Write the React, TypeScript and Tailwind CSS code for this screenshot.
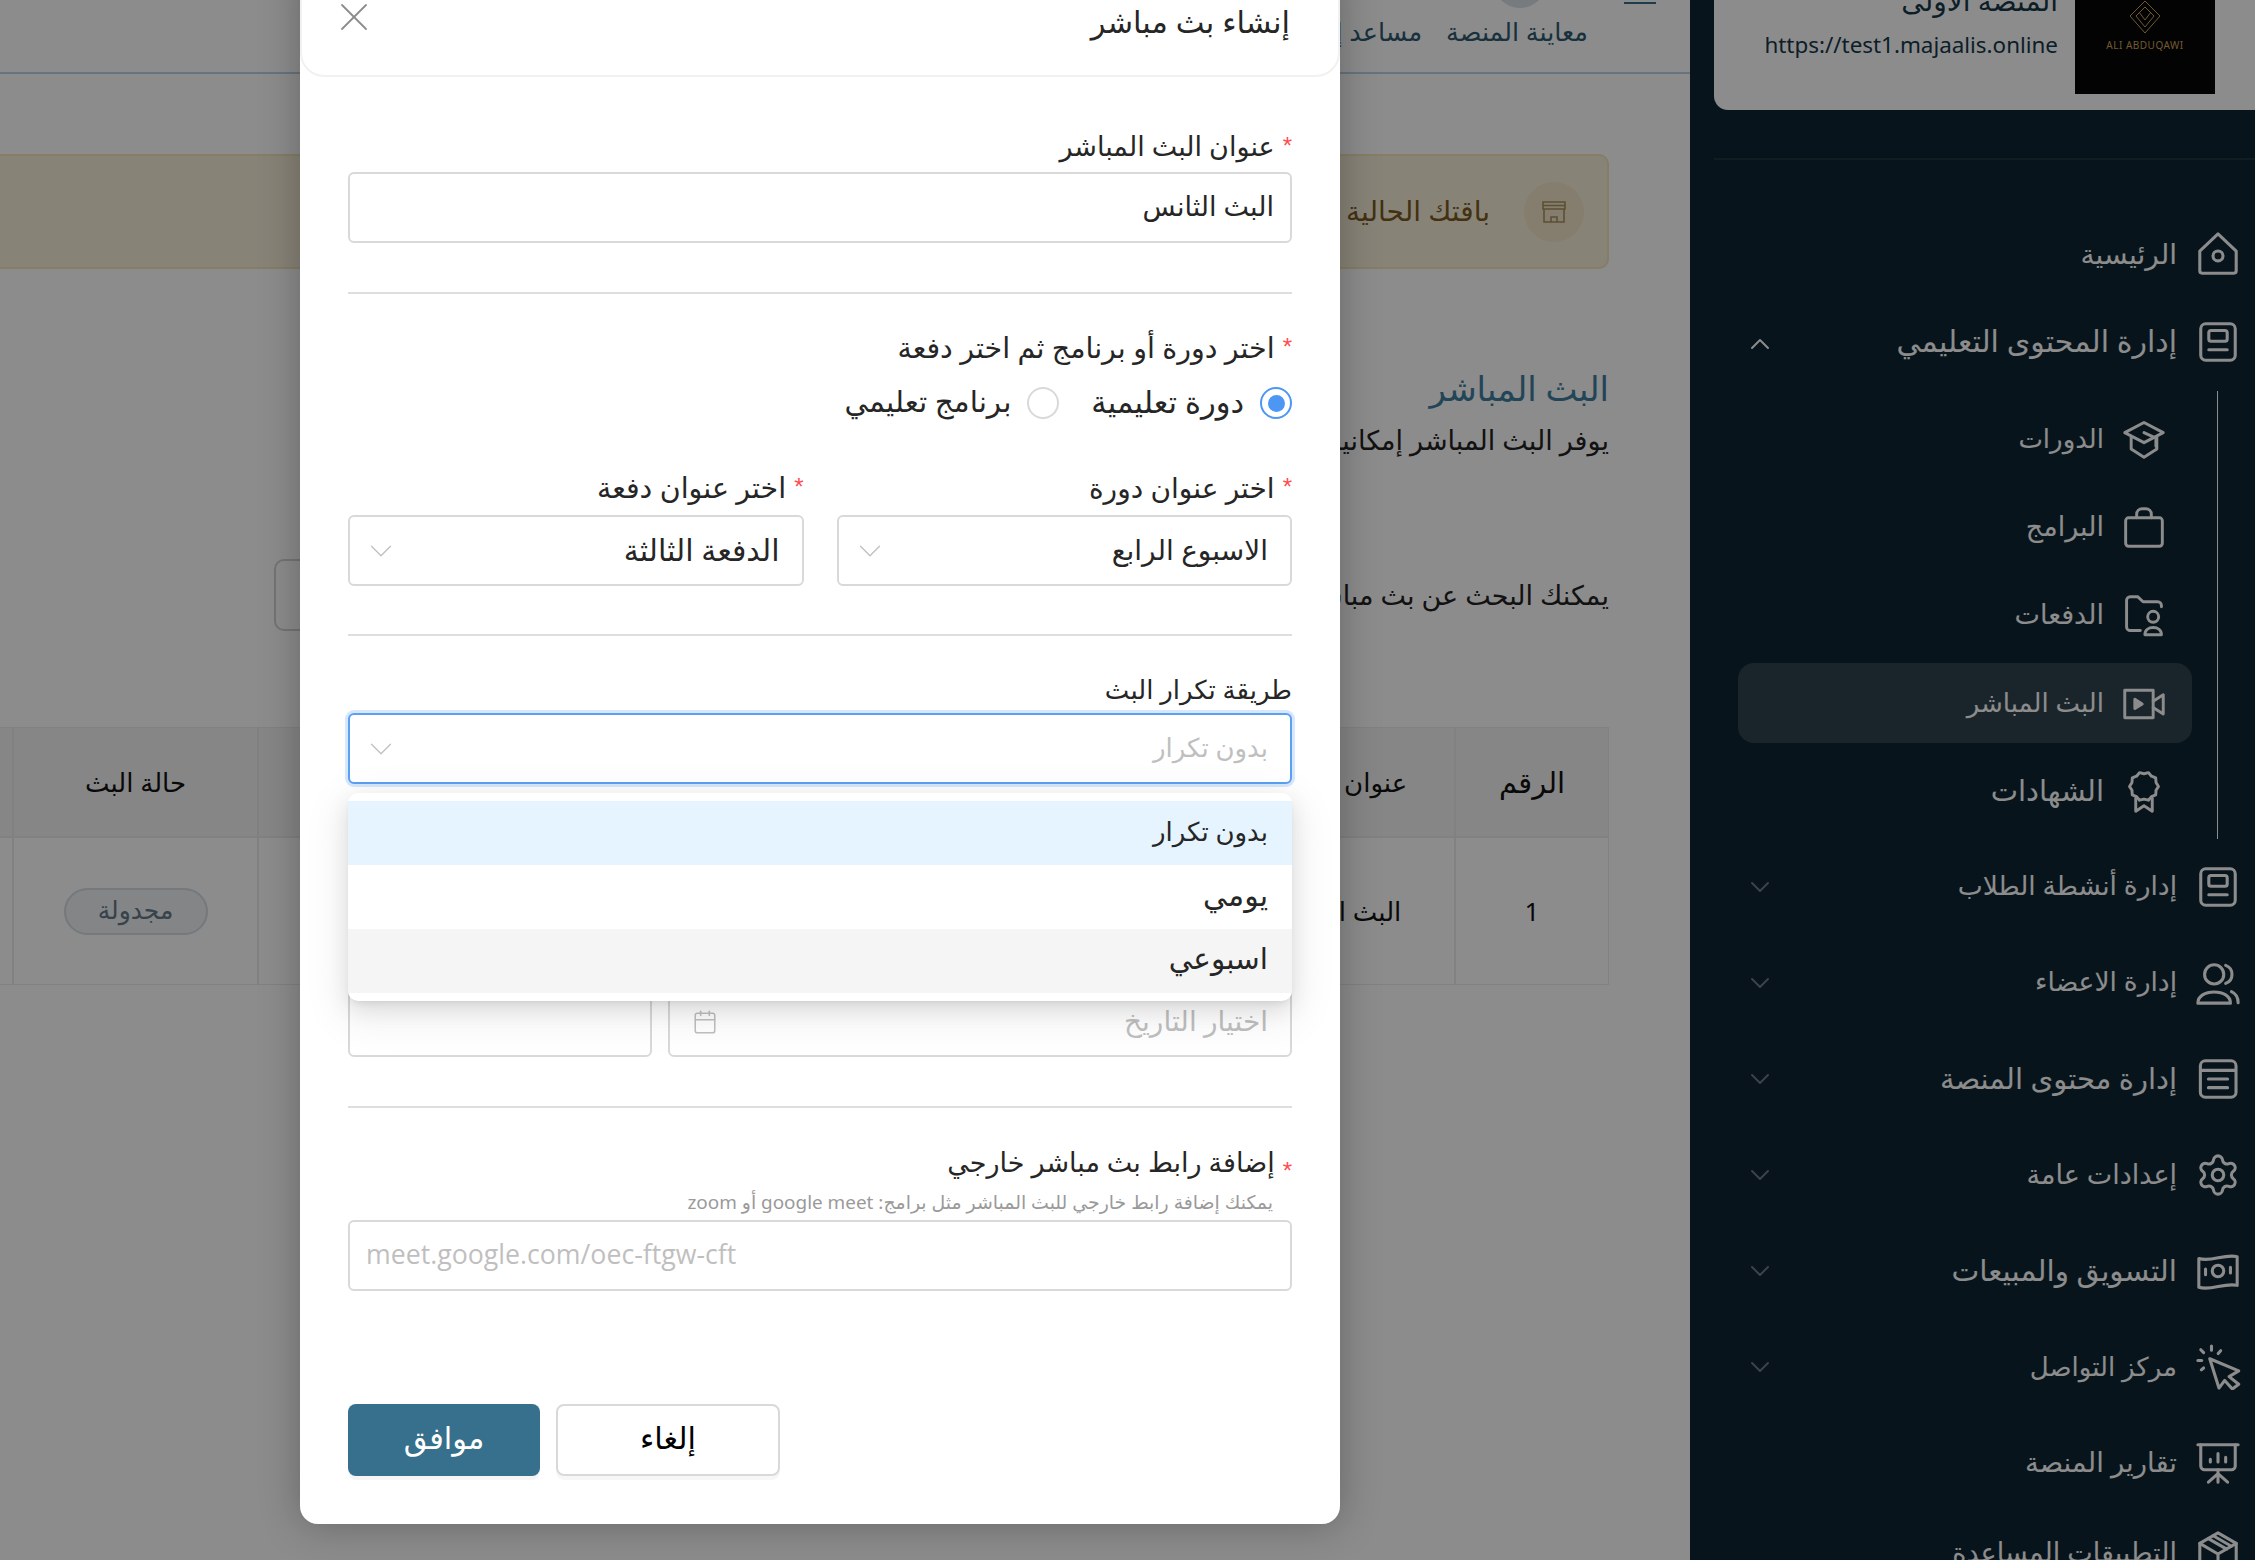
import React from "react";
import { ChevronDown, ChevronUp, X, Calendar, Settings } from "lucide-react";

const I = ({ children, s = "w-[46px] h-[46px]" }: { children: React.ReactNode; s?: string }) => (
  <svg viewBox="0 0 24 24" fill="none" stroke="currentColor" strokeWidth="1.6" strokeLinecap="round" strokeLinejoin="round" className={`${s} shrink-0`}>
    {children}
  </svg>
);

const scallop = Array.from({ length: 20 }, (_, i) => {
  const r = i % 2 ? 7.9 : 6.9;
  const a = (i / 20) * Math.PI * 2;
  return `${(12 + r * Math.sin(a)).toFixed(2)},${(9.5 - r * Math.cos(a)).toFixed(2)}`;
}).join(" ");

const icons = {
  home: <><path d="M2.5 10.5 12 1.5l9.5 9v10.3a1.2 1.2 0 0 1-1.2 1.2H3.7a1.2 1.2 0 0 1-1.2-1.2Z" /><circle cx="12" cy="13" r="2.6" /></>,
  content: <><rect x="3" y="2.5" width="18" height="19" rx="2.6" /><rect x="7.2" y="6" width="9.6" height="5.6" rx="1.2" /><path d="M7.2 16h9.6" /></>,
  list: <><rect x="2.8" y="2.5" width="18.6" height="19" rx="2.6" /><path d="M3 7.5h18M7 12h10M7 16.5h10" /></>,
  cap: <><path d="M12 3 22.5 8.5 12 14 1.5 8.5Z" /><path d="M5 11v6.5l7 4.5 7-4.5V11" /><path d="M12 8.5l6.5 3V16" /></>,
  case: <><rect x="2" y="7" width="20" height="15.5" rx="1.6" /><path d="M8 7V5a3 3 0 0 1 3-3h2a3 3 0 0 1 3 3v2" /></>,
  folder: <><path d="M10 20.5H4.5a2 2 0 0 1-2-2V4a2 2 0 0 1 2-2h4l3 2.8h8a2 2 0 0 1 2 2v.7" /><circle cx="17" cy="13" r="3" /><path d="M12.5 22.8c0-2.6 2-4 4.5-4s4.5 1.4 4.5 4Z" /></>,
  video: <><rect x="1.5" y="5" width="15.5" height="15" /><path d="M17 11l5.5-3.5v10.5L17 14.5" /><path d="M7 10v5l4-2.5Z" fill="currentColor" /></>,
  award: <><polygon points={scallop} /><path d="M7.5 16v7l4.5-3 4.5 3v-7" /></>,
  users: <><circle cx="10" cy="7.5" r="5" /><path d="M1.5 22.5c0-3.8 3.8-5.8 8.5-5.8s8.5 2 8.5 5.8Z" /><path d="M16 2.8a5 5 0 0 1 0 9.4M19 16.5c2 .9 3.5 2.6 3.5 5.8" /></>,
  money: <><path d="M2 5.5c6.5 2 13-2.5 20-1v15c-7-1.5-13.5 3-20 1Z" /><circle cx="12" cy="12" r="3" /><path d="M5.5 11v3M18.5 10v3" /></>,
  board: <><path d="M1.5 2.5h21" /><path d="M3 2.5v11a2 2 0 0 0 2 2h14a2 2 0 0 0 2-2v-11" /><path d="M12 7v4.5M8 10v1.5M16 9v2.5M12 15.5V22M12 17.5 7 22M12 17.5l5 4.5" /></>,
  box: <><path d="M12 1.5 21.5 7v10L12 22.5 2.5 17V7Z" /><path d="M2.5 7 12 12.5 21.5 7M12 12.5v10M7 4.5l9.5 5.5M9.5 3l9.5 5.5" /></>,
  click: <><path d="M7.7 7.7 22.8 14l-5 3 5 4-3.3 2.5-4-4.5-3 4Z" /><path d="M3 3l1.5 1.5M8.6 1v2.2M13.4 3.5l-1.3 1.5M1.5 8.6h2M3.3 13.5l1.2-1" /></>,
};

const Top = ({ icon, label, chev, up, h = "h-[96px]", t = "text-[27px]" }: { icon: React.ReactNode; label: string; chev?: boolean; up?: boolean; h?: string; t?: string }) => (
  <div className={`${h} shrink-0 flex items-center pr-[14px] pl-[54px] text-white`}>
    <I>{icon}</I>
    <span className={`mr-[18px] pb-[3px] ${t} leading-none flex-1 whitespace-nowrap`}>{label}</span>
    {chev && (up ? <ChevronUp className="w-[32px] h-[32px] mt-[3px] text-white" strokeWidth={1.5} /> : <ChevronDown className="w-[32px] h-[32px] text-[#6d7a80]" strokeWidth={1.5} />)}
  </div>
);

const Sub = ({ icon, label, active, t = "text-[27px]" }: { icon: React.ReactNode; label: string; active?: boolean; t?: string }) => (
  <div className={`h-[80px] shrink-0 flex items-center pr-[26px] rounded-[16px] text-white ${active ? "bg-[#2f444f]" : ""}`}>
    <I s="w-[44px] h-[44px]">{icon}</I>
    <span className={`mr-[18px] pb-[3px] ${t} leading-none whitespace-nowrap`}>{label}</span>
  </div>
);

const Sidebar = () => (
  <aside className="w-[565px] shrink-0 h-[1560px] overflow-hidden bg-[#0e2633] flex flex-col">
    <div className="ml-[24px] h-[110px] shrink-0 bg-white rounded-bl-[14px] flex items-start pr-[40px]">
      <div className="w-[140px] h-[94px] bg-[#060606] flex flex-col items-center shrink-0">
        <svg viewBox="0 0 32 34" className="w-[32px] h-[34px] text-[#c9a35d]" fill="none" stroke="currentColor" strokeWidth="1">
          <path d="M16 1 31 16 16 33 1 16Z" />
          <path d="M16 7 25 16 16 27 7 16Z" />
          <path d="M10 12l6 8 6-8" />
        </svg>
        <span className="text-[#c9a35d] text-[10px] mt-[4px] tracking-[0.5px] font-['Noto_Sans',sans-serif]" dir="ltr">ALI ABDUQAWI</span>
      </div>
      <div className="mr-[17px] -mt-[20px] flex flex-col items-start">
        <span className="text-[28px] leading-[40px] text-[#16384a]">المنصة الأولى</span>
        <span className="mt-[5px] text-[22.4px] leading-[40px] text-[#16384a]" dir="ltr">https://test1.majaalis.online</span>
      </div>
    </div>
    <div className="ml-[24px] mt-[48px] h-[2px] shrink-0 bg-[#22363f]" />
    <div className="h-[50px] shrink-0" />
    <Top h="h-[88px]" icon={icons.home} label="الرئيسية" t="text-[28px]" />
    <Top h="h-[88px]" icon={icons.content} label="إدارة المحتوى التعليمي" chev up t="text-[30px]" />
    <div className="mt-[5px] mr-[37px] h-[448px] shrink-0 border-r border-white pr-[25px] pl-[48px] pt-[8px] flex flex-col gap-[8px]">
      <Sub icon={icons.cap} label="الدورات" t="text-[26px]" />
      <Sub icon={icons.case} label="البرامج" />
      <Sub icon={icons.folder} label="الدفعات" />
      <Sub icon={icons.video} label="البث المباشر" active t="text-[26px]" />
      <Sub icon={icons.award} label="الشهادات" t="text-[29px]" />
    </div>
    <Top icon={icons.content} label="إدارة أنشطة الطلاب" chev t="text-[26.5px]" />
    <Top icon={icons.users} label="إدارة الاعضاء" chev t="text-[26.5px]" />
    <Top icon={icons.list} label="إدارة محتوى المنصة" chev t="text-[29px]" />
    <Top icon={<Settings x={0} y={0} width={24} height={24} strokeWidth={1.6} />} label="إعدادات عامة" chev />
    <Top icon={icons.money} label="التسويق والمبيعات" chev t="text-[29.5px]" />
    <Top icon={icons.click} label="مركز التواصل" chev t="text-[26px]" />
    <Top icon={icons.board} label="تقارير المنصة" t="text-[27.5px]" />
    <Top h="h-[84px]" icon={icons.box} label="التطبيقات المساعدة" />
  </aside>
);

const Main = () => (
  <main className="w-[1690px] shrink-0 h-[1560px] overflow-hidden bg-white flex flex-col text-[#111]">
    <header className="h-[74px] shrink-0 border-b-2 border-[#bcd4e6] flex items-start pr-[34px]">
      <div className="w-[32px] h-[2px] mt-[2px] bg-[#36708c] shrink-0" />
      <div className="relative mr-[36px] mt-[14px] text-[25.5px] leading-[34px] text-[#2f5a70] whitespace-nowrap">
        <div className="absolute top-[-60px] right-[41px] w-[54px] h-[54px] rounded-full bg-[#d5e0e8]" />
        معاينة المنصة
      </div>
      <div className="mr-[24px] mt-[14px] text-[25.5px] leading-[34px] text-[#2f5a70] whitespace-nowrap">مساعد إنشاء الدورات</div>
    </header>
    <div className="pr-[81px] flex flex-col flex-1 min-h-0">
      <section className="mt-[80px] w-[1700px] h-[115px] shrink-0 rounded-[10px] border-2 border-[#f3e3b8] bg-[#f8efd9] flex items-center pr-[23px]">
        <div className="w-[60px] h-[60px] rounded-full bg-[#f3e4c6] flex items-center justify-center text-[#a8905d] shrink-0">
          <svg viewBox="0 0 26 24" className="w-[26px] h-[24px]" fill="none" stroke="currentColor" strokeWidth="1.6">
            <path d="M2 2h22v7H2Z" />
            <path d="M3 9v13h20V9M10 22v-5h6v5M2 5.5h22" />
          </svg>
        </div>
        <span className="mr-[34px] pb-[3px] text-[28px] text-[#7a5a1f]">باقتك الحالية</span>
      </section>
      <h1 className="mt-[97px] text-[34px] leading-[44px] text-[#3f7e9e] font-medium whitespace-nowrap">البث المباشر</h1>
      <p className="mt-[11px] text-[27px] leading-[38px] whitespace-nowrap text-[#222]">يوفر البث المباشر إمكانية التواصل مع الطلاب</p>
      <div className="mt-[100px] w-[1335px] h-[72px] shrink-0 flex items-center justify-between">
        <p className="text-[27px] whitespace-nowrap text-[#222]">يمكنك البحث عن بث مباشر</p>
        <div className="w-[200px] h-[72px] rounded-[10px] border-2 border-[#d4d4d4]" />
      </div>
      <div className="mt-[96px] w-[1700px] shrink-0 grid grid-cols-[154px_214px_983px_245px_104px] border border-[#ececec] text-[26px]">
        <div className="h-[110px] bg-[#f5f5f5] border-l-2 border-b-2 border-[#ececec] flex items-center justify-center whitespace-nowrap text-[29px]">الرقم</div>
        {["عنوان البث", "", "حالة البث", ""].map((t, i) => (
          <div key={i} className="h-[110px] bg-[#f5f5f5] border-l-2 border-b-2 border-[#ececec] flex items-center justify-center whitespace-nowrap">{t}</div>
        ))}
        <div className="h-[146px] border-l-2 border-[#ececec] flex items-center justify-center">1</div>
        <div className="h-[146px] border-l-2 border-[#ececec] flex items-center justify-center whitespace-nowrap pr-[20px]">البث الثانس</div>
        <div className="h-[146px] border-l-2 border-[#ececec]" />
        <div className="h-[146px] border-l-2 border-[#ececec] flex items-center justify-center">
          <span className="w-[144px] h-[47px] rounded-full border-2 border-[#d3dde4] bg-[#eef2f5] text-[#677889] text-[25px] flex items-center justify-center pb-[3px]">مجدولة</span>
        </div>
        <div className="h-[146px]" />
      </div>
    </div>
  </main>
);

const Label = ({ text, star = true, low, t = "text-[27px]" }: { text: string; star?: boolean; low?: boolean; t?: string }) => (
  <div className={`h-[40px] flex items-center ${t} text-[#262626] whitespace-nowrap`}>
    {star && <span className={`text-[#ff4d4f] text-[24px] ml-[8px] font-['Liberation_Sans',sans-serif] ${low ? "mt-[18px]" : ""}`}>*</span>}
    {text}
  </div>
);

const Box = ({ children, cls = "" }: { children?: React.ReactNode; cls?: string }) => (
  <div className={`h-[71px] rounded-[6px] border-2 border-[#d9d9d9] flex items-center px-[22px] pb-[3px] text-[26px] bg-white ${cls}`}>{children}</div>
);

const SelectBox = ({ text, muted, focus, cls = "", t = "text-[26px]" }: { text: string; muted?: boolean; focus?: boolean; cls?: string; t?: string }) => (
  <div className={`h-[71px] rounded-[6px] border-2 flex items-center justify-between pr-[22px] pl-[12px] ${t} bg-white ${focus ? "border-[#5ba1f2] shadow-[0_0_0_3px_#d6e7fe]" : "border-[#d9d9d9]"} ${muted ? "text-[#bfbfbf]" : "text-[#262626]"} ${cls}`}>
    <span className="pb-[3px]">{text}</span>
    <ChevronDown className="w-[38px] h-[38px] text-[#bfbfbf]" strokeWidth={0.8} />
  </div>
);

const Divider = ({ cls }: { cls: string }) => <div className={`h-[2px] bg-[#dedede] ${cls}`} />;

const Modal = () => (
  <div className="absolute left-[300px] top-[-40px] w-[1040px] h-[1564px] bg-white rounded-[18px] shadow-[0_0_40px_rgba(0,0,0,0.28)] text-[#262626]">
    <div className="h-[117px] rounded-b-[24px] border-b-2 border-x-2 border-[#f1f1f1] flex items-start justify-between pr-[48px] pl-[28px]">
      <h2 className="mt-[39px] text-[30.5px] leading-[44px] whitespace-nowrap">إنشاء بث مباشر</h2>
      <X className="mt-[33px] w-[48px] h-[48px] text-[#8c8c8c]" strokeWidth={0.9} />
    </div>
    <div className="pr-[48px] pl-[48px] pt-[49px]">
      <Label text="عنوان البث المباشر" />
      <Box cls="mt-[6px] pr-[16px] text-[27px]">البث الثانس</Box>
      <Divider cls="mt-[49px]" />
      <div className="mt-[33px]"><Label t="text-[28.5px]" text="اختر دورة أو برنامج ثم اختر دفعة" /></div>
      <div className="mt-[16px] h-[40px] flex items-center text-[29.5px]">
        <span className="w-[32px] h-[32px] rounded-full border-2 border-[#4c97f3] flex items-center justify-center shrink-0"><span className="w-[17px] h-[17px] rounded-full bg-[#4c97f3]" /></span>
        <span className="mr-[16px] pb-[3px] text-[30.5px]">دورة تعليمية</span>
        <span className="mr-[32px] w-[32px] h-[32px] rounded-full border-2 border-[#d9d9d9] shrink-0" />
        <span className="mr-[16px] pb-[3px]">برنامج تعليمي</span>
      </div>
      <div className="mt-[44px] grid grid-cols-2 gap-[33px]">
        <div><Label t="text-[28px]" text="اختر عنوان دورة" /><SelectBox cls="mt-[8px]" t="text-[28px]" text="الاسبوع الرابع" /></div>
        <div><Label t="text-[28.5px]" text="اختر عنوان دفعة" /><SelectBox cls="mt-[8px]" t="text-[30px]" text="الدفعة الثالثة" /></div>
      </div>
      <Divider cls="mt-[48px]" />
      <div className="mt-[33px]"><Label star={false} t="text-[26px]" text="طريقة تكرار البث" /></div>
      <div className="relative mt-[4px]">
        <SelectBox text="بدون تكرار" muted focus />
        <div className="absolute top-[80px] inset-x-0 h-[208px] py-[8px] bg-white rounded-[10px] shadow-[0_12px_40px_10px_rgba(0,0,0,0.06),0_8px_22px_rgba(0,0,0,0.1),0_4px_9px_-5px_rgba(0,0,0,0.14)] z-10">
          <div className="h-[64px] bg-[#e6f4ff] flex items-center px-[24px] pb-[3px] text-[26px]">بدون تكرار</div>
          <div className="h-[64px] flex items-center px-[24px] pb-[6px] text-[30px]">يومي</div>
          <div className="h-[64px] bg-[#f5f5f5] flex items-center px-[24px] pb-[5px] text-[29.5px]">اسبوعي</div>
        </div>
      </div>
      <div className="mt-[202px] flex gap-[16px]">
        <Box cls="flex-1 justify-between pl-[22px] text-[#bfbfbf] text-[28px]">
          <span>اختيار التاريخ</span>
          <Calendar className="w-[26px] h-[26px] mt-[4px]" strokeWidth={1.4} />
        </Box>
        <Box cls="w-[304px] shrink-0" />
      </div>
      <Divider cls="mt-[49px]" />
      <div className="mt-[34px]"><Label low text="إضافة رابط بث مباشر خارجي" /></div>
      <p className="mr-[19px] mt-[5px] h-[30px] text-[18.9px] leading-[30px] text-[#9a9a9a] whitespace-nowrap">يمكنك إضافة رابط خارجي للبث المباشر مثل برامج: google meet أو zoom</p>
      <Box cls="mt-[3px] pl-[16px] text-[#bfbfbf]"><span dir="ltr" className="w-full text-left text-[26.7px] font-['Open_Sans',sans-serif]">meet.google.com/oec-ftgw-cft</span></Box>
      <div className="mt-[113px] flex justify-end gap-[16px] text-[30.5px]">
        <button className="w-[224px] h-[72px] pb-[4px] rounded-[8px] border-2 border-[#d9d9d9] text-black bg-white shadow-[0_4px_0_rgba(0,0,0,0.03)]">إلغاء</button>
        <button className="w-[192px] h-[72px] pb-[4px] rounded-[8px] bg-[#36708c] text-white shadow-[0_4px_0_rgba(0,0,0,0.04)]">موافق</button>
      </div>
    </div>
  </div>
);

export default function App() {
  return (
    <div dir="rtl" className="relative w-[2255px] h-[1560px] overflow-hidden flex font-['Noto_Sans','DejaVu_Sans',sans-serif]">
      <Sidebar />
      <Main />
      <div className="absolute inset-0 bg-black/45" />
      <Modal />
    </div>
  );
}
